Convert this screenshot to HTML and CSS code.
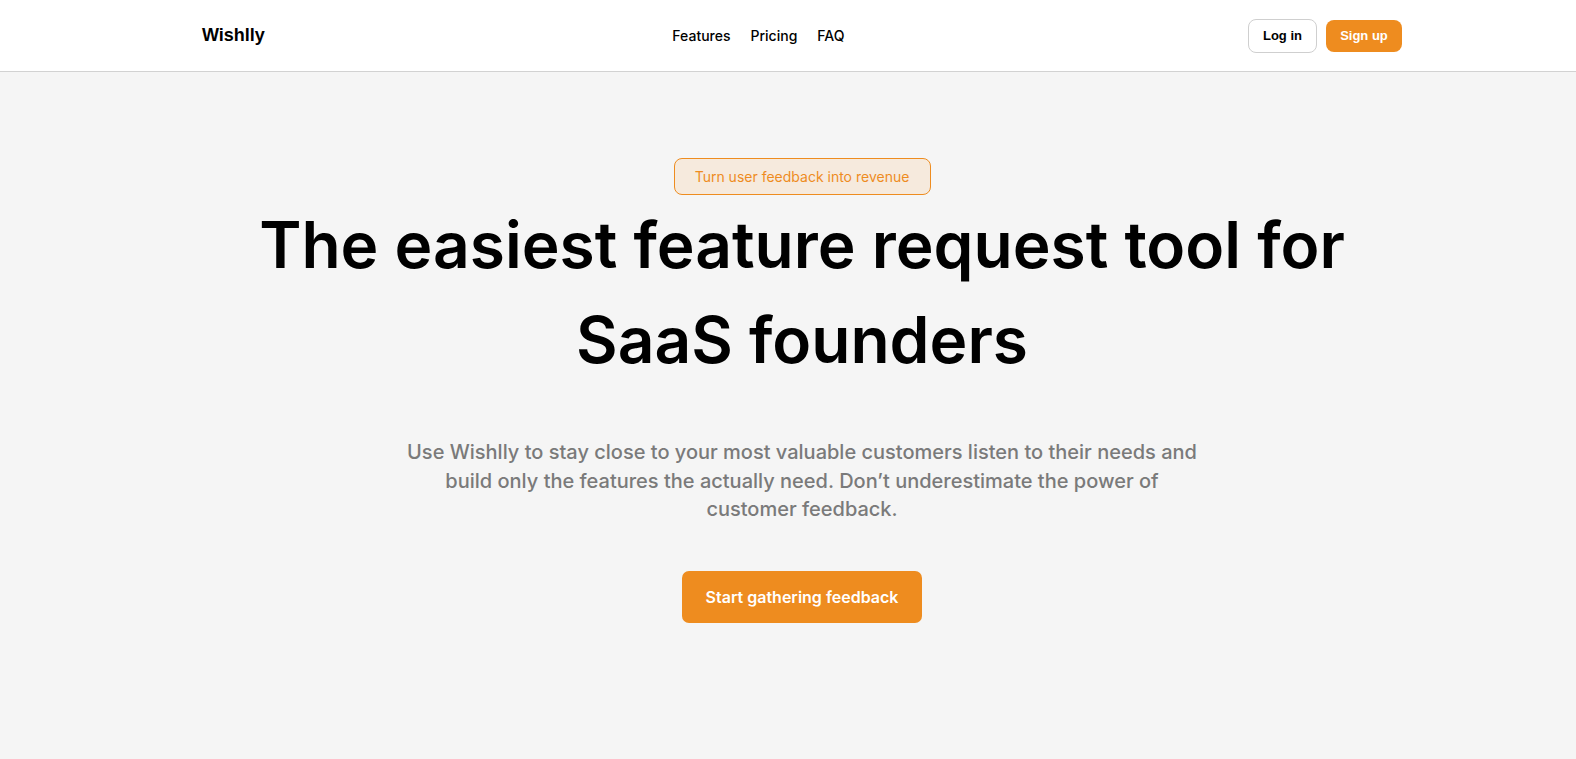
FILE: index.html
```html
<!DOCTYPE html>
<html lang="en">
<head>
<meta charset="utf-8">
<title>Wishlly</title>
<link rel="stylesheet" href="styles.css">
</head>
<body>
<header class="site-header">
  <div class="header-inner">
    <a class="logo" href="#">Wishlly</a>
    <nav class="nav">
      <a href="#">Features</a>
      <a href="#">Pricing</a>
      <a href="#">FAQ</a>
    </nav>
    <div class="auth">
      <button class="btn-login">Log in</button>
      <button class="btn-signup">Sign up</button>
    </div>
  </div>
</header>
<main class="hero">
  <div class="badge">Turn user feedback into revenue</div>
  <h1 class="title">The easiest feature request tool for<br>SaaS founders</h1>
  <p class="lead">Use Wishlly to stay close to your most valuable customers listen to their needs and build only the features the actually need. Don’t underestimate the power of customer feedback.</p>
  <button class="cta">Start gathering feedback</button>
</main>
</body>
</html>
```
FILE: styles.css
```css
* { box-sizing: border-box; }
html, body { margin: 0; padding: 0; }
body {
  background: #f5f5f5;
  font-family: Inter, "Noto Sans", sans-serif;
  color: #000;
  min-height: 100vh;
}
.site-header {
  background: #fff;
  border-bottom: 1px solid #d2d2d2;
  height: 72px;
}
.header-inner {
  width: 1200px;
  margin-left: 202px;
  height: 71px;
  display: flex;
  align-items: center;
  justify-content: space-between;
}
.logo {
  font-family: "Liberation Sans", Arial, sans-serif;
  font-weight: 700;
  font-size: 18px;
  color: #000;
  text-decoration: none;
}
.nav {
  display: flex;
  gap: 20px;
  margin-left: 4px;
}
.nav a {
  font-size: 14px;
  font-weight: 500;
  color: #000;
  text-decoration: none;
}
.auth {
  display: flex;
  align-items: center;
  gap: 9px;
}
.btn-login, .btn-signup {
  font-family: "Liberation Sans", Arial, sans-serif;
  font-weight: 700;
  font-size: 13px;
  border-radius: 8px;
  cursor: pointer;
}
.btn-login {
  background: #fff;
  color: #000;
  border: 1px solid #cfcfcf;
  width: 69px;
  height: 34px;
}
.btn-signup {
  background: #ee8c1f;
  color: #fff;
  border: none;
  width: 76px;
  height: 32px;
}
.hero {
  padding-left: 28px;
  padding-top: 86px;
  display: flex;
  flex-direction: column;
  align-items: center;
  text-align: center;
}
.badge {
  width: 257px;
  height: 37px;
  display: flex;
  align-items: center;
  justify-content: center;
  border: 1px solid #ee8c1f;
  background: #f6eadd;
  color: #ee8c1f;
  font-size: 14px;
  border-radius: 8px;
}
.title {
  margin: 2px 0 0;
  font-size: 64px;
  font-weight: 600;
  line-height: 95px;
  letter-spacing: 0;
}
.lead {
  margin: 51px 0 0;
  max-width: 800px;
  font-size: 20px;
  font-weight: 500;
  line-height: 28.5px;
  color: #7a7a7a;
}
.cta {
  margin-top: 47px;
  width: 240px;
  height: 52px;
  border: none;
  border-radius: 7px;
  background: #ee8c1f;
  color: #fff;
  font-family: Inter, sans-serif;
  font-weight: 600;
  font-size: 16px;
  cursor: pointer;
}
```
